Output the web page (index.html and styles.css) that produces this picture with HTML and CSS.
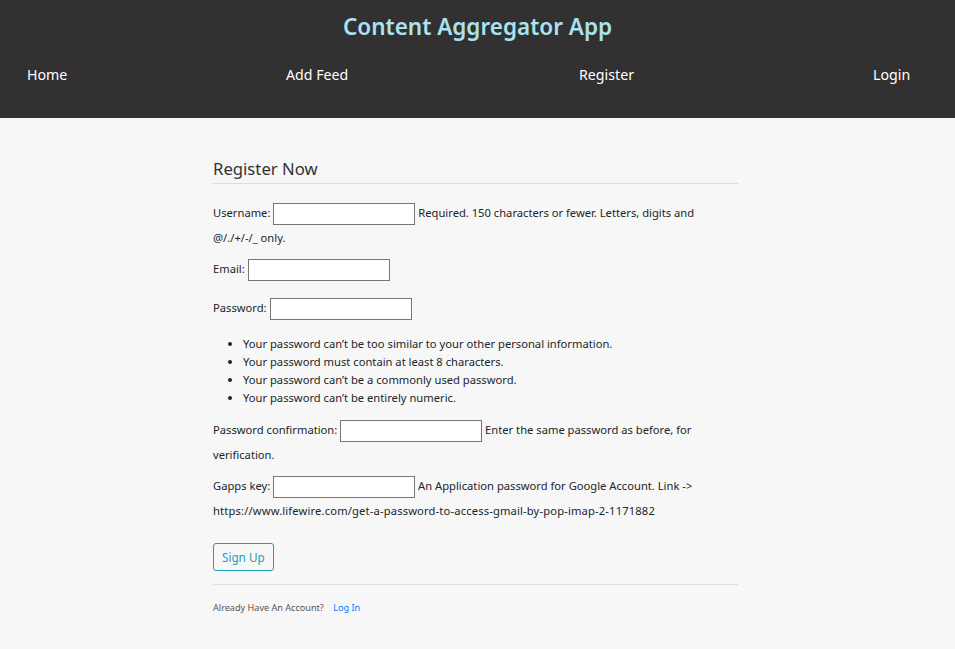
FILE: index.html
```html
<!DOCTYPE html>
<html>
<head>
<meta charset="utf-8">
<title>Content Aggregator App</title>
<link rel="stylesheet" href="styles.css">
</head>
<body>
<header class="topbar">
  <h1 class="brand">Content Aggregator App</h1>
  <nav class="nav">
    <a href="#">Home</a>
    <a href="#">Add Feed</a>
    <a href="#">Register</a>
    <a href="#">Login</a>
  </nav>
</header>
<main class="main">
  <section class="card">
    <h2 class="legend">Register Now</h2>
    <form class="form">
      <p class="row r-user"><label>Username:</label> <input type="text" class="field"> <span class="help">Required. 150 characters or fewer. Letters, digits and @/./+/-/_ only.</span></p>
      <p class="row r-email"><label>Email:</label> <input type="text" class="field"></p>
      <p class="row r-pass"><label>Password:</label> <input type="password" class="field"></p>
      <ul class="rules">
        <li>Your password can’t be too similar to your other personal information.</li>
        <li>Your password must contain at least 8 characters.</li>
        <li>Your password can’t be a commonly used password.</li>
        <li>Your password can’t be entirely numeric.</li>
      </ul>
      <p class="row r-conf"><label>Password confirmation:</label> <input type="password" class="field"> <span class="help">Enter the same password as before, for verification.</span></p>
      <p class="row r-gapps"><label>Gapps key:</label> <input type="text" class="field"> <span class="help">An Application password for Google Account. Link -&gt; <span class="url">https://www.lifewire.com/get-a-password-to-access-gmail-by-pop-imap-2-1171882</span></span></p>
      <div class="actions"><button type="button" class="btn">Sign Up</button></div>
    </form>
    <div class="foot">
      <small>Already Have An Account? <a href="#" class="login">Log In</a></small>
    </div>
  </section>
</main>
</body>
</html>
```
FILE: styles.css
```css
html, body {
  margin: 0;
  padding: 0;
}
body {
  background: #f7f7f7;
  font-family: "Noto Sans", "Open Sans", sans-serif;
  color: #212529;
  height: 649px;
}
.topbar {
  background: #323031;
  height: 118px;
  box-sizing: border-box;
  padding-top: 11px;
}
.brand {
  margin: 0;
  text-align: center;
  font-size: 22.5px;
  font-weight: 600;
  color: #a9e3ee;
  line-height: 32px;
}
.nav {
  display: grid;
  grid-template-columns: 259px 293px 294px auto;
  padding-left: 27px;
  margin-top: 22px;
}
.nav a {
  color: #ffffff;
  text-decoration: none;
  font-size: 14.2px;
  line-height: 20px;
}
.main {
  padding-top: 38px;
}
.card {
  width: 525px;
  margin: 0 auto;
  position: relative;
  left: -2px;
}
.legend {
  margin: 0;
  font-size: 16.7px;
  font-weight: 400;
  color: #333;
  line-height: 26px;
  padding-bottom: 1px;
  border-bottom: 1px solid #dcdcdc;
}
.form {
  font-size: 11.2px;
  padding-top: 16px;
}
.row {
  margin: 0;
  line-height: 25px;
}
.r-email { margin-top: 6px; }
.r-pass { margin-top: 14px; }
.r-conf { margin-top: 10.5px; }
.r-gapps { margin-top: 6px; }
.url {
  letter-spacing: 0.15px;
}
.field {
  width: 142px;
  height: 22px;
  box-sizing: border-box;
  border: 1px solid #767676;
  background: #fff;
  padding: 1px 2px;
  vertical-align: middle;
  margin: 0;
  font: inherit;
}
.rules {
  margin: 14.5px 0 0 0;
  padding-left: 30px;
  line-height: 18px;
}
.actions {
  padding-top: 19.5px;
  padding-bottom: 13px;
  border-bottom: 1px solid #dedede;
}
.btn {
  display: block;
  font: inherit;
  font-size: 11.7px;
  color: #17a2b8;
  background: transparent;
  border: 1px solid #17a2b8;
  border-radius: 3px;
  padding: 4px 8px;
  line-height: 18px;
  height: 28px;
}
.foot {
  padding-top: 15px;
  font-size: 9.1px;
  line-height: 16px;
  color: #555;
}
.foot small {
  font-size: inherit;
}
.login {
  color: #007bff;
  text-decoration: none;
  margin-left: 7px;
}
```
